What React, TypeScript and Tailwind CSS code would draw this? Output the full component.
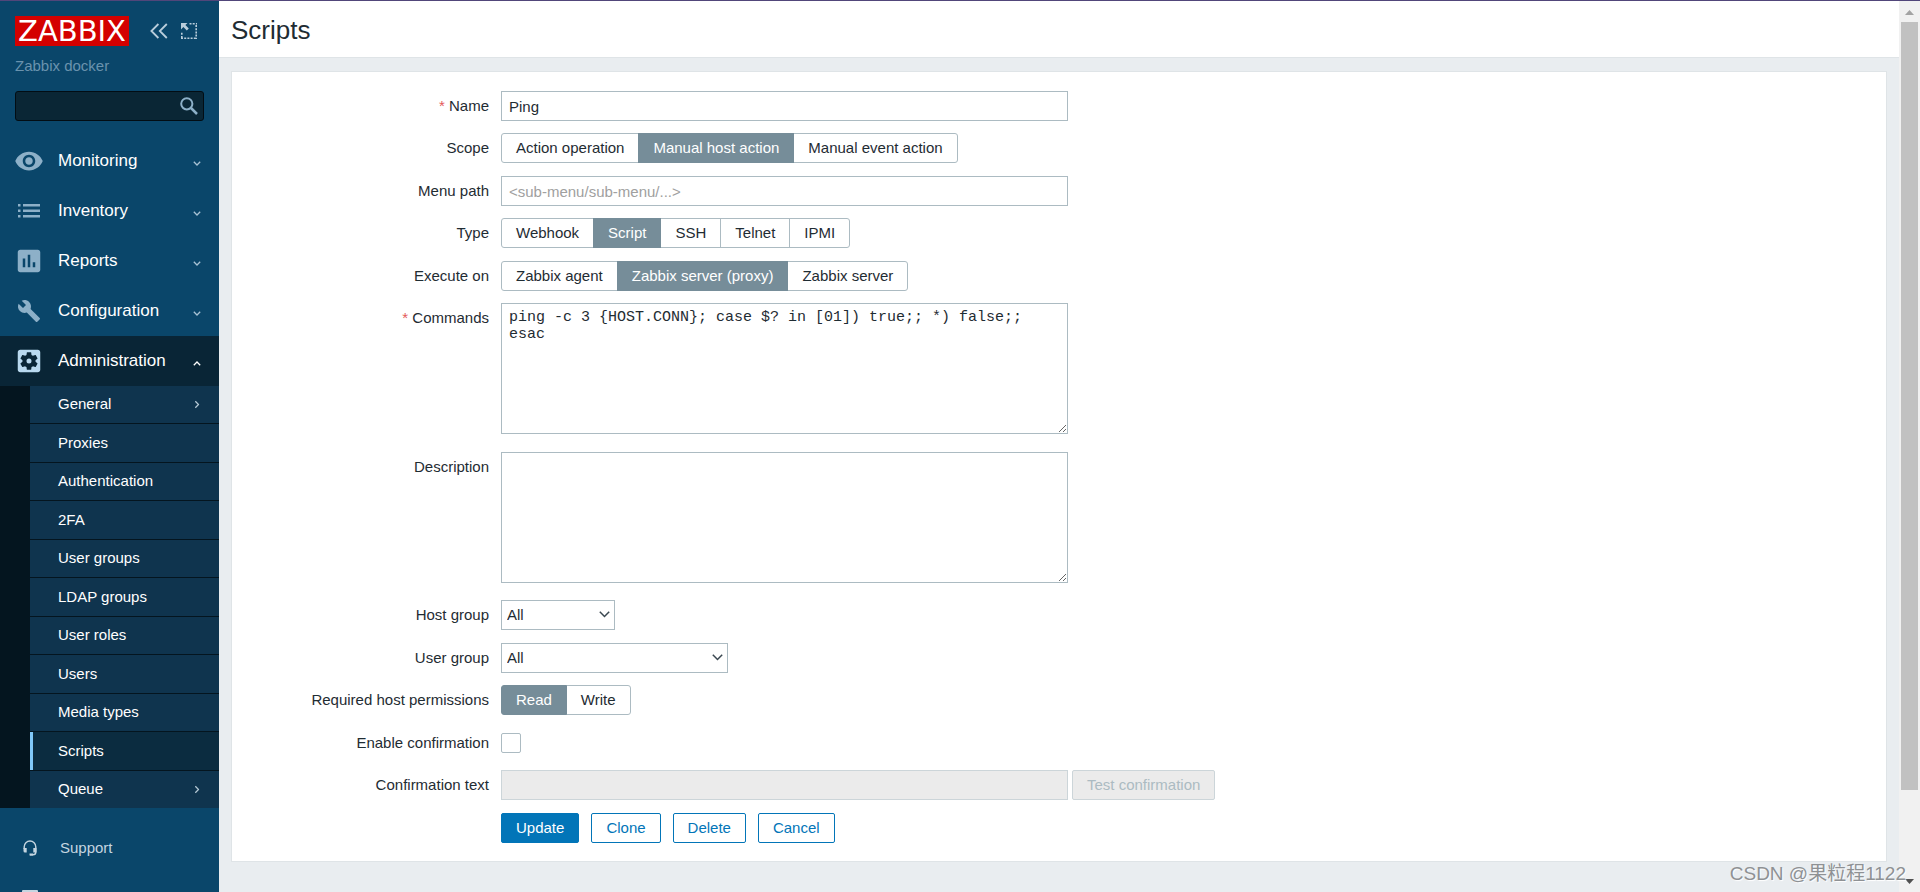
import { useState, type ReactNode } from "react";

const ICONS = {
  eye: "M12 4.5C7 4.5 2.73 7.61 1 12c1.73 4.39 6 7.5 11 7.5s9.27-3.11 11-7.5c-1.73-4.39-6-7.5-11-7.5zM12 17c-2.76 0-5-2.24-5-5s2.24-5 5-5 5 2.24 5 5-2.24 5-5 5zm0-8c-1.66 0-3 1.34-3 3s1.34 3 3 3 3-1.34 3-3-1.34-3-3-3z",
  list: "M1 5h2.5v2.5H1zM6 5h17v2.5H6zM1 10.5h2.5V13H1zM6 10.500h17V13H6zM1 16h2.500v2.500H1zM6 16h17v2.500H6z",
  chart: "M19 3H5c-1.1 0-2 .9-2 2v14c0 1.1.9 2 2 2h14c1.1 0 2-.9 2-2V5c0-1.1-.9-2-2-2zM9 17H7v-7h2v7zm4 0h-2V7h2v10zm4 0h-2v-4h2v4z",
  wrench: "M22.7 19l-9.1-9.1c.9-2.3.4-5-1.5-6.9-2-2-5-2.4-7.4-1.3L9 6 6 9 1.6 4.7C.4 7.1.9 10.1 2.9 12.1c1.9 1.9 4.6 2.4 6.9 1.5l9.1 9.1c.4.4 1 .4 1.4 0l2.3-2.3c.5-.4.5-1.1.1-1.4z",
  gear: "M19 3H5c-1.1 0-2 .9-2 2v14c0 1.1.9 2 2 2h14c1.1 0 2-.9 2-2V5c0-1.1-.9-2-2-2zm-1.75 9c0 .23-.02.46-.05.68l1.48 1.16c.13.11.17.3.08.45l-1.4 2.42c-.09.15-.27.21-.43.15l-1.74-.7c-.36.28-.76.51-1.18.69l-.26 1.85c-.03.17-.18.3-.35.3h-2.8c-.17 0-.32-.13-.35-.29l-.26-1.85c-.43-.18-.82-.41-1.18-.69l-1.74.7c-.16.06-.34 0-.43-.15l-1.4-2.42c-.09-.15-.05-.34.08-.45l1.48-1.16c-.03-.23-.05-.46-.05-.69s.02-.46.05-.68l-1.48-1.16c-.13-.11-.17-.3-.08-.45l1.4-2.42c.09-.15.27-.21.43-.15l1.74.7c.36-.28.76-.51 1.18-.69l.26-1.85c.03-.17.18-.3.35-.3h2.8c.17 0 .32.13.35.29l.26 1.85c.43.18.82.41 1.18.69l1.74-.7c.16-.06.34 0 .43.15l1.4 2.42c.09.15.05.34-.08.45l-1.48 1.16c.03.23.05.46.05.69zM12 10a2 2 0 1 0 0 4 2 2 0 0 0 0-4z",
};

const MENU = [
  { label: "Monitoring", icon: ICONS.eye, size: "size-[30px]" },
  { label: "Inventory", icon: ICONS.list, size: "size-6" },
  { label: "Reports", icon: ICONS.chart, size: "size-[30px]" },
  { label: "Configuration", icon: ICONS.wrench, size: "size-6" },
];

const SUBMENU = [
  "General",
  "Proxies",
  "Authentication",
  "2FA",
  "User groups",
  "LDAP groups",
  "User roles",
  "Users",
  "Media types",
  "Scripts",
  "Queue",
];

function Chevron({ className }: { className: string }) {
  return (
    <svg viewBox="0 0 8 5" className={className} fill="none" stroke="currentColor" strokeWidth="1.3" aria-hidden="true">
      <path d="M.8.8 4 4 7.2.8" />
    </svg>
  );
}

function Sidebar() {
  return (
    <aside className="flex w-[219px] shrink-0 flex-col overflow-hidden bg-[#0a466a] text-white">
      <div className="flex shrink-0 items-center pt-[15px] pl-[15px]">
        <div className="flex h-[30px] w-[114px] items-center justify-center bg-[#d40000] font-['DejaVu_Sans',sans-serif] text-[29px] leading-[30px]">
          ZABBIX
        </div>
        <button type="button" aria-label="Collapse sidebar" className="ml-[21px] text-[#b9cddb]">
          <svg viewBox="0 0 18 16" className="h-4 w-[18px]" fill="none" stroke="currentColor" strokeWidth="1.8">
            <path d="M8.4 1 1.4 8l7 7M16.8 1l-7 7 7 7" />
          </svg>
        </button>
        <button type="button" aria-label="Hide sidebar" className="ml-[13px] text-[#b9cddb]">
          <svg viewBox="0 0 16 16" className="size-4" fill="none" stroke="currentColor">
            <path d="M8.5.8H16M15.2 2v14M0 15.2h15M.8 15V8.5" strokeWidth="1.6" strokeDasharray="2 1.2" />
            <path d="M0 0h6.5L4.4 2.1l3.4 3.4-2 2-3.4-3.4L0 6.5z" fill="currentColor" stroke="none" />
          </svg>
        </button>
      </div>
      <div className="mt-[10px] shrink-0 pl-[15px] text-[15px] leading-5 text-[#6a93ae]">Zabbix docker</div>
      <form className="mx-[15px] mt-[15px] flex h-[30px] shrink-0 items-center rounded-[3px] border border-[#020d14] bg-[#0a2635] pr-[5px]">
        <input aria-label="Search" className="h-full min-w-0 flex-1 px-2 text-[15px] outline-none" />
        <button type="button" aria-label="Search" className="text-[#8db0c8]">
          <svg viewBox="0 0 18 18" className="size-[18px]" fill="none" stroke="currentColor">
            <circle cx="6.8" cy="6.8" r="5.6" strokeWidth="2" />
            <path d="m11 11 6 6" strokeWidth="2.5" />
          </svg>
        </button>
      </form>
      <nav className="mt-[15px] shrink-0">
        {MENU.map((item) => (
          <a key={item.label} href="#" className="flex h-[50px] items-center text-[17px]">
            <span className="flex w-[58px] justify-center">
              <svg viewBox="0 0 24 24" className={item.size} fill="#8db0c8" aria-hidden="true">
                <path d={item.icon} />
              </svg>
            </span>
            <span className="flex-1">{item.label}</span>
            <Chevron className="mr-[18px] mt-1 h-[5px] w-2 text-[#a9c3d5]" />
          </a>
        ))}
        <a href="#" className="flex h-[50px] items-center bg-[#092536] text-[17px]">
          <span className="flex w-[58px] justify-center">
            <svg viewBox="0 0 24 24" className="size-[30px]" fill="#b9d9ef" aria-hidden="true">
              <path d={ICONS.gear} fillRule="evenodd" />
            </svg>
          </span>
          <span className="flex-1">Administration</span>
          <Chevron className="mr-[18px] mt-1 h-[5px] w-2 rotate-180 text-white" />
        </a>
        <ul className="bg-[#04151f] pl-[30px] text-[15px]">
          {SUBMENU.map((label) => (
            <li key={label} className="h-[38px] border-b border-[#04151f] last:h-[37px] last:border-b-0 even:h-[39px]">
              <a
                href="#"
                className={
                  label === "Scripts"
                    ? "flex h-full items-center border-l-[3px] border-[#80c8f8] bg-[#0b2c40] pl-[25px]"
                    : "flex h-full items-center bg-[#0f344e] pl-7"
                }
              >
                <span className="flex-1">{label}</span>
                {(label === "General" || label === "Queue") && (
                  <Chevron className="mr-[18px] h-[5px] w-2 -rotate-90 text-[#b5c8d4]" />
                )}
              </a>
            </li>
          ))}
        </ul>
      </nav>
      <nav className="mt-5 shrink-0 text-[15px] text-[#c5d5e0]">
        <a href="#" className="flex h-10 items-center">
          <span className="flex w-[60px] justify-center">
            <svg viewBox="0 0 14 16" className="h-4 w-3.5" fill="none" stroke="currentColor" aria-hidden="true">
              <path d="M1.2 9V6.800a5.800 5.800 0 0 1 11.600 0V12c0 1.800-1 2.800-2.800 2.800H7" strokeWidth="1.400" />
              <path d="M.5 8h3.200v4.500H2A1.500 1.500 0 0 1 .5 11zM13.500 8h-3.200v4.500H13.500zM6.500 13.500h3.500v2H6.500z" fill="currentColor" stroke="none" />
            </svg>
          </span>
          Support
        </a>
        <a href="#" aria-label="Share" className="flex h-10 items-start pt-[22px]">
          <span className="flex w-[60px] justify-center">
            <svg viewBox="0 0 16 16" className="size-4" fill="currentColor" aria-hidden="true">
              <rect width="16" height="16" rx="1" />
            </svg>
          </span>
        </a>
      </nav>
    </aside>
  );
}

function Row({ label, htmlFor, required, children }: { label?: string; htmlFor?: string; required?: boolean; children: ReactNode }) {
  return (
    <div className="flex items-start gap-3 even:mb-px">
      <label htmlFor={htmlFor} className="w-[257px] shrink-0 text-right leading-[30px]">
        {required && <span className="text-[#e45959]">* </span>}
        {label}
      </label>
      {children}
    </div>
  );
}

function Segmented({ name, options, initial }: { name: string; options: string[]; initial: string }) {
  const [value, setValue] = useState(initial);
  return (
    <div role="radiogroup" aria-label={name} className="flex">
      {options.map((option) => (
        <label
          key={option}
          className="relative -ml-px flex h-[30px] cursor-pointer items-center border border-[#acbbc2] px-3.5 first:ml-0 first:rounded-l-[3px] last:rounded-r-[3px] has-checked:z-10 has-checked:border-[#768d99] has-checked:bg-[#768d99] has-checked:text-white"
        >
          <input
            type="radio"
            name={name}
            value={option}
            checked={value === option}
            onChange={() => setValue(option)}
            className="sr-only"
          />
          {option}
        </label>
      ))}
    </div>
  );
}

function Select({ id, className }: { id: string; className: string }) {
  return (
    <div className={className}>
      <select id={id} className="h-[30px] w-full appearance-none border border-[#acbbc2] bg-white px-[5px] outline-none">
        <option>All</option>
      </select>
      <svg viewBox="0 0 11 7" className="pointer-events-none absolute top-[11px] right-[5px] h-[7px] w-[11px]" fill="none" stroke="#3a4750" strokeWidth="1.5" aria-hidden="true">
        <path d="M.8.8 5.500 5.500 10.200.8" />
      </svg>
    </div>
  );
}

const FIELD = "w-[567px] border border-[#acbbc2] bg-white px-[7px] outline-none placeholder:text-[#a0a0a0]";
const BUTTON = "h-[30px] rounded-[2px] border border-[#0275b8] px-3.5";

function ScriptForm() {
  return (
    <form className="flex flex-col gap-3 border border-[#dfe4e7] bg-white pt-[19px] pb-[18px] text-[15px]">
      <Row label="Name" htmlFor="name" required>
        <input id="name" defaultValue="Ping" className={`${FIELD} h-[30px]`} />
      </Row>
      <Row label="Scope">
        <Segmented name="Scope" options={["Action operation", "Manual host action", "Manual event action"]} initial="Manual host action" />
      </Row>
      <Row label="Menu path" htmlFor="menu-path">
        <input id="menu-path" placeholder="<sub-menu/sub-menu/...>" className={`${FIELD} h-[30px]`} />
      </Row>
      <Row label="Type">
        <Segmented name="Type" options={["Webhook", "Script", "SSH", "Telnet", "IPMI"]} initial="Script" />
      </Row>
      <Row label="Execute on">
        <Segmented name="Execute on" options={["Zabbix agent", "Zabbix server (proxy)", "Zabbix server"]} initial="Zabbix server (proxy)" />
      </Row>
      <Row label="Commands" htmlFor="commands" required>
        <textarea
          id="commands"
          defaultValue={"ping -c 3 {HOST.CONN}; case $? in [01]) true;; *) false;;\nesac"}
          className={`${FIELD} mb-[5px] h-[131px] pt-[5px] font-['Liberation_Mono',monospace] text-[15px] leading-[17px]`}
        />
      </Row>
      <Row label="Description" htmlFor="description">
        <textarea id="description" className={`${FIELD} mb-[5px] h-[131px] pt-[5px]`} />
      </Row>
      <Row label="Host group" htmlFor="host-group">
        <Select id="host-group" className="relative w-[114px]" />
      </Row>
      <Row label="User group" htmlFor="user-group">
        <Select id="user-group" className="relative w-[227px]" />
      </Row>
      <Row label="Required host permissions">
        <Segmented name="Required host permissions" options={["Read", "Write"]} initial="Read" />
      </Row>
      <Row label="Enable confirmation" htmlFor="enable-confirmation">
        <input
          id="enable-confirmation"
          type="checkbox"
          className="my-[5px] size-5 appearance-none rounded-[2px] border border-[#acbbc2] bg-white checked:bg-[#768d99]"
        />
      </Row>
      <Row label="Confirmation text" htmlFor="confirmation-text">
        <div className="flex gap-1">
          <input id="confirmation-text" disabled className="h-[30px] w-[567px] border border-[#ccd5d9] bg-[#ebebeb] px-[7px]" />
          <button type="button" disabled className="h-[30px] rounded-[2px] border border-[#ccd5d9] bg-[#ebebeb] px-3.5 text-[#acbbc2]">
            Test confirmation
          </button>
        </div>
      </Row>
      <Row>
        <div className="flex gap-3">
          <button type="button" className={`${BUTTON} bg-[#0275b8] text-white`}>Update</button>
          <button type="button" className={`${BUTTON} text-[#0275b8]`}>Clone</button>
          <button type="button" className={`${BUTTON} text-[#0275b8]`}>Delete</button>
          <button type="button" className={`${BUTTON} text-[#0275b8]`}>Cancel</button>
        </div>
      </Row>
    </form>
  );
}

function Scrollbar() {
  return (
    <div className="flex w-[21px] shrink-0 flex-col items-center bg-[#f1f1f1]" aria-hidden="true">
      <svg viewBox="0 0 21 21" className="size-[21px] shrink-0">
        <path d="M6 14h9l-4.500-5z" fill="#a3a3a3" />
      </svg>
      <div className="w-[17px] flex-[768] bg-[#c1c1c1]" />
      <div className="flex-[81]" />
      <svg viewBox="0 0 21 21" className="size-[21px] shrink-0">
        <path d="M6 8h9l-4.500 5z" fill="#505050" />
      </svg>
    </div>
  );
}

export default function App() {
  return (
    <div className="relative flex h-screen overflow-hidden border-t border-[#51467a] bg-[#e9edf0] font-['Liberation_Sans',Arial,sans-serif] text-[#1f2c33]">
      <Sidebar />
      <div className="min-w-0 flex-1">
        <header className="flex h-[57px] items-center border-b border-[#dfe4e7] bg-white px-3 pt-0.5">
          <h1 className="text-[26px] leading-8">Scripts</h1>
        </header>
        <main className="px-3 pt-[13px]">
          <ScriptForm />
        </main>
      </div>
      <Scrollbar />
      <div className="absolute right-[14px] bottom-1 font-['Liberation_Sans','Noto_Sans_CJK_SC',sans-serif] text-[19px] leading-7 text-[#8e9194] [text-shadow:1px_1px_1px_#fff]">
        CSDN @果粒程1122
      </div>
    </div>
  );
}
